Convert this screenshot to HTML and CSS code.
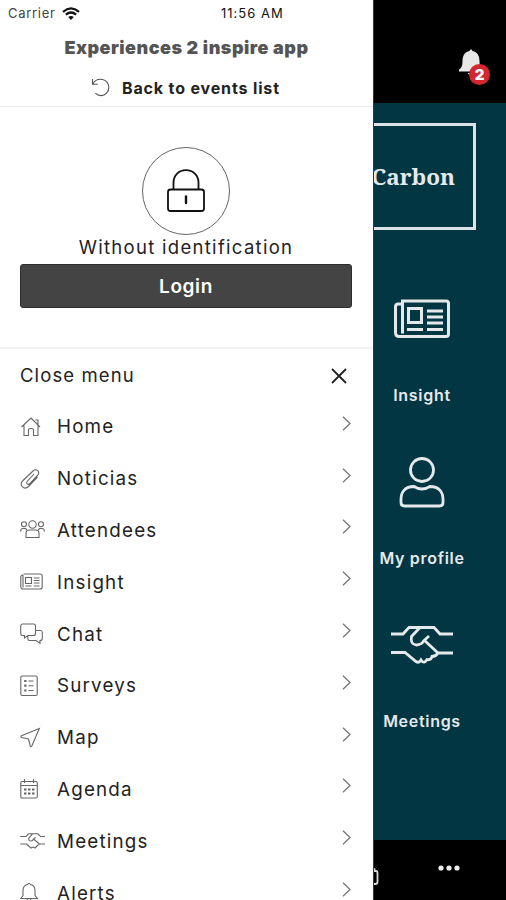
FILE: index.html
```
<!DOCTYPE html>
<html lang="en">
<head>
    <meta charset="UTF-8">
    <meta name="viewport" content="width=device-width, initial-scale=1.0">
    <title>Experiences 2 inspire app</title>
    <link rel="stylesheet" href="styles.css">
</head>
<body>

<div class="screen">
    <aside class="drawer">
        <div class="status-bar">
            <span class="carrier">Carrier</span>
            <svg class="wifi" width="18" height="13" viewBox="0 0 18 13" fill="none" stroke="#111" stroke-width="2.2">
                <path d="M1 4.8Q9-2 17 4.8M3.8 7.6Q9 3.4 14.2 7.6"/>
                <path d="M9 13L6.2 10.1Q9 7.8 11.8 10.1Z" fill="#111" stroke="none"/>
            </svg>
            <span class="clock">11:56 AM</span>
        </div>

        <h1 class="app-title">Experiences 2 inspire app</h1>

        <a class="back-link">
            <svg width="19" height="19" viewBox="0 0 19 19" fill="none" stroke="#555" stroke-width="1.1">
                <path d="M1.5 1V6.2H6.8M1.8 6C4 2 8 .9 11.4 1.5C15 2.2 17.8 5.4 17.8 9.2C17.8 14 14.4 17.6 10 17.6C7.5 17.6 5.6 16.6 4.4 15.2"/>
            </svg>
            <span>Back to events list</span>
        </a>

        <section class="account">
            <div class="avatar">
                <svg width="40" height="44" viewBox="0 0 40 44" fill="none" stroke="#111" stroke-width="1.8">
                    <rect x="2" y="20.5" width="36" height="21.5" rx="2.5"/>
                    <path d="M7.5 20V13.5C7.5 6 13 1.2 20 1.2S32.500 6 32.500 13.500V20"/>
                    <path d="M20 27.500V34" stroke-width="2.400" stroke-linecap="round"/>
                </svg>
            </div>
            <p class="account-name">Without identification</p>
            <button class="login">Login</button>
        </section>

        <div class="close-row">
            <span>Close menu</span>
            <svg width="16" height="16" viewBox="0 0 16 16" fill="none" stroke="#222" stroke-width="1.8">
                <path d="M1 1L15 15M15 1L1 15"/>
            </svg>
        </div>

        <ul class="menu">
            <li>
                <svg class="icon" viewBox="0 0 26 22">
                    <path d="M1.500 11L11 2L20 11M4 9V19.500H8.500V14Q8.500 12.500 11 12.500T13.500 14V19.500H18V9M15.500 4H18V8.500"/>
                </svg>
                <span class="label">Home</span>
                <svg class="chevron" viewBox="0 0 9 15"><path d="M1 .8L8 7.500L1 14.200"/></svg>
            </li>
            <li>
                <svg class="icon" viewBox="0 0 26 22">
                    <path d="M14 6L7.500 13C5.500 15.500 8 17.500 10 15.500L17.500 7.500C20.500 4 16.500 -.2 13 3L3 12.500C-1.500 17 4 22.500 8.500 18.500L17.500 9"/>
                </svg>
                <span class="label">Noticias</span>
                <svg class="chevron" viewBox="0 0 9 15"><path d="M1 .8L8 7.500L1 14.200"/></svg>
            </li>
            <li>
                <svg class="icon" viewBox="0 0 26 22">
                    <circle cx="12.500" cy="5.500" r="3.700"/>
                    <circle cx="4" cy="5.300" r="2.500"/>
                    <circle cx="21" cy="5.300" r="2.500"/>
                    <path d="M6 18.500V14Q6 11.500 9 11H16Q19 11.500 19 14V18.500ZM.6 12.500Q.6 9.500 3 9.500H5.500L7 11M24.400 12.500Q24.400 9.500 22 9.500H19.500L18 11"/>
                </svg>
                <span class="label">Attendees</span>
                <svg class="chevron" viewBox="0 0 9 15"><path d="M1 .8L8 7.500L1 14.200"/></svg>
            </li>
            <li>
                <svg class="icon" viewBox="0 0 26 22">
                    <path d="M3.500 3H20Q22.200 3 22.200 5V16Q22.200 18 20 18H2.500Q.8 18 .8 16V6Q.8 4 3 4M3 4V16.500M5.500 6.500H11.500V12.500H5.500ZM13.800 7H19.500M13.800 9.500H19.500M13.800 12H19.500M5.500 15H11.500M13.800 15H19.500"/>
                </svg>
                <span class="label">Insight</span>
                <svg class="chevron" viewBox="0 0 9 15"><path d="M1 .8L8 7.500L1 14.200"/></svg>
            </li>
            <li>
                <svg class="icon" viewBox="0 0 26 22">
                    <path d="M2.500 1H13.500Q15.500 1 15.500 3V10.500Q15.500 12.500 13.500 12.500H8L4.500 15V12.500H2.500Q.7 12.500 .7 10.500V3Q.7 1 2.500 1ZM15.500 7.500H20.500Q22.300 7.500 22.300 9.500V15.500Q22.300 17.500 20 17.500V20.200L16 17.500H9.500Q7.800 17.500 7.800 15.500V12.800"/>
                </svg>
                <span class="label">Chat</span>
                <svg class="chevron" viewBox="0 0 9 15"><path d="M1 .8L8 7.500L1 14.200"/></svg>
            </li>
            <li>
                <svg class="icon" viewBox="0 0 26 22">
                    <rect x=".8" y="1" width="16.400" height="19.500" rx="1.500"/>
                    <path d="M8.500 6H13.500M8.500 10.700H13.500M8.500 15.500H13.500"/>
                    <path d="M4.200 6H6.500M4.200 10.700H6.500M4.200 15.500H6.500" stroke-width="2.200"/>
                </svg>
                <span class="label">Surveys</span>
                <svg class="chevron" viewBox="0 0 9 15"><path d="M1 .8L8 7.500L1 14.200"/></svg>
            </li>
            <li>
                <svg class="icon" viewBox="0 0 26 22">
                    <path d="M19.300 1.500L1.500 8.800Q.2 9.700 1.500 10.500L8.500 12L10.300 19Q11 20.300 11.800 19Z"/>
                </svg>
                <span class="label">Map</span>
                <svg class="chevron" viewBox="0 0 9 15"><path d="M1 .8L8 7.500L1 14.200"/></svg>
            </li>
            <li>
                <svg class="icon" viewBox="0 0 26 22">
                    <path d="M2 3.500H16Q17.300 3.500 17.300 5V18.500Q17.300 20 16 20H2Q.8 20 .8 18.500V5Q.8 3.500 2 3.500ZM.8 7.500H17.300M4.500 1V5M13.500 1V5"/>
                    <path d="M4 11.500H14.500M4 15.500H14.500" stroke-width="1.800" stroke-dasharray="2.500 1.500"/>
                </svg>
                <span class="label">Agenda</span>
                <svg class="chevron" viewBox="0 0 9 15"><path d="M1 .8L8 7.500L1 14.200"/></svg>
            </li>
            <li>
                <svg class="icon" viewBox="0 0 26 22">
                    <path d="M.3 6.500H6L8.500 3.800H18L20.500 6.500H25M.3 14H6.500L11 18L13 17L15 18L17 16L19.500 14H25M12.500 3.800L9 8Q8 11 11 11Q13 11 13.500 9L15.500 7.500M13.500 9L19.500 14"/>
                </svg>
                <span class="label">Meetings</span>
                <svg class="chevron" viewBox="0 0 9 15"><path d="M1 .8L8 7.500L1 14.200"/></svg>
            </li>
            <li>
                <svg class="icon" viewBox="0 0 26 22">
                    <path d="M.8 16.500L3 13.500V8.500Q3 3.500 7.500 2.500Q9 .5 10.500 2.500Q15 3.500 15 8.500V13.500L17.500 16.500ZM7 17Q9 20.500 11 17"/>
                </svg>
                <span class="label">Alerts</span>
                <svg class="chevron" viewBox="0 0 9 15"><path d="M1 .8L8 7.500L1 14.200"/></svg>
            </li>
        </ul>
    </aside>

    <main class="app">
        <header class="app-header">
            <div class="bell">
                <svg width="24" height="28" viewBox="0 0 24 28" fill="#e8e8e8">
                    <path d="M10.500 2Q12 -1.500 13.500 2C18.500 3 20.500 7 20.500 12C20.500 17 21.500 19 24 20.500V22.500H0V20.500C2.500 19 3.500 17 3.500 12C3.500 7 5.500 3 10.500 2ZM8.500 24H15.500Q12 28.500 8.500 24Z"/>
                </svg>
                <span class="badge">2</span>
            </div>
        </header>

        <div class="content">
            <div class="brand">Carbon</div>

            <div class="tile">
                <svg width="64" height="64" viewBox="0 0 64 64" fill="none" stroke="#e6e9ec" stroke-width="3">
                    <path d="M12.500 14H56Q58.500 14 58.500 16.500V47Q58.500 49.500 56 49.500H9.500Q5.500 49.500 5.500 45.500V20Q5.500 17 8 17H12.500ZM12.500 14V46.500"/>
                    <path d="M18.500 21.500H31.500V35.500H18.500ZM37 24H53M37 30H53M37 36H53M37 42.500H53M17 42.500H33"/>
                </svg>
                <span>Insight</span>
            </div>
            <div class="tile">
                <svg width="64" height="64" viewBox="0 0 64 64" fill="none" stroke="#e6e9ec" stroke-width="2.800">
                    <ellipse cx="32" cy="20" rx="11.500" ry="11.500"/>
                    <path d="M24 36.500C15 36.500 11 42 11 49.500V52.500Q11 56 14.500 56H49.500Q53 56 53 52.500V49.500C53 42 49 36.500 40 36.500Q36 39 32 39T24 36.500Z"/>
                </svg>
                <span>My profile</span>
            </div>
            <div class="tile">
                <svg width="64" height="64" viewBox="0 0 64 64" fill="none" stroke="#e6e9ec" stroke-width="2.800">
                    <path d="M1 21H13L19 14.500H44L50 21H63M1 39.500H15L26 48.500Q29 50.500 31 47Q34 51.500 37 46.500Q41 47.500 42 43.500Q46 43.500 48 40H63"/>
                    <path d="M30 14.500L21.500 23.500Q20 31.500 26.500 32Q32 31.500 33.500 28L39 23M34 27L48 40"/>
                </svg>
                <span>Meetings</span>
            </div>
        </div>

        <footer class="tab-bar">
            <svg class="tab-icon" width="5" height="18" viewBox="0 0 5 18" fill="none" stroke="#ddd" stroke-width="1.800">
                <path d="M0 1.200H.5V3H2Q3.500 3 3.500 5V14Q3.500 16 1 16H0"/>
            </svg>
            <svg class="more" width="22" height="6" viewBox="0 0 22 6" fill="#eee">
                <circle cx="3" cy="3" r="2.600"/>
                <circle cx="11" cy="3" r="2.600"/>
                <circle cx="19" cy="3" r="2.600"/>
            </svg>
        </footer>
    </main>
</div>

</body>
</html>
```
FILE: styles.css
```
* {
    box-sizing: border-box;
}
body {
    margin: 0;
    font-family: Inter, "Open Sans", sans-serif;
    color: #222;
    background-color: #fff;
}
svg {
    display: block;
    flex-shrink: 0;
}
.screen {
    display: flex;
    width: 506px;
    height: 900px;
    overflow: hidden;
}

/* side menu */
.drawer {
    width: 373px;
    flex-shrink: 0;
    background-color: #fff;
}
.status-bar {
    display: flex;
    align-items: center;
    height: 26px;
    padding-left: 8px;
    font-size: 13px;
    color: #444;
}
.carrier {
    width: 54px;
    letter-spacing: 0.7px;
}
.clock {
    margin-left: 141px;
    letter-spacing: 1px;
    color: #111;
}
.app-title {
    margin: 0;
    height: 43px;
    line-height: 43px;
    font-size: 18px;
    font-weight: 900;
    letter-spacing: 0.5px;
    text-align: center;
    color: #555;
}
.back-link {
    display: flex;
    align-items: center;
    gap: 12px;
    height: 38px;
    padding-left: 91px;
    border-bottom: 1px solid #e9e9e9;
    font-size: 16px;
    font-weight: 700;
    letter-spacing: 0.85px;
}
.account {
    height: 242px;
    padding: 40px 21px 0 20px;
    border-bottom: 2px solid #f2f2f2;
    text-align: center;
}
.avatar {
    display: flex;
    align-items: center;
    justify-content: center;
    width: 88px;
    height: 88px;
    margin: 0 auto;
    border: 1px solid #666;
    border-radius: 50%;
}
.account-name {
    margin: 0;
    height: 29px;
    line-height: 25px;
    font-size: 18.5px;
    letter-spacing: 1.3px;
}
.login {
    display: block;
    width: 100%;
    height: 44px;
    border: 1px solid #2d2d2d;
    border-radius: 3px;
    background-color: #444;
    color: #fff;
    font-family: inherit;
    font-size: 19px;
    font-weight: 600;
    letter-spacing: 0.6px;
}
.close-row {
    display: flex;
    align-items: center;
    justify-content: space-between;
    height: 52px;
    padding: 2px 26px 0 20px;
    font-size: 18.5px;
    letter-spacing: 1.1px;
}
.close-row span {
    margin-bottom: 3px;
}
.menu {
    list-style: none;
    margin: 0;
    padding: 0;
}
.menu li {
    display: flex;
    align-items: center;
    height: 51.8px;
    padding: 0 22px 0 20px;
    font-size: 18.8px;
    letter-spacing: 1.2px;
}
.icon {
    width: 26px;
    height: 22px;
    margin-right: 11px;
    fill: none;
    stroke: #666;
    stroke-width: 1.1;
}
.label {
    flex: 1;
}
.chevron {
    width: 9px;
    height: 15px;
    margin-bottom: 7px;
    fill: none;
    stroke: #777;
    stroke-width: 1.3;
}

/* app behind the menu */
.app {
    display: flex;
    flex-direction: column;
    flex: 1;
    min-width: 0;
    overflow: hidden;
    border-left: 1px solid #333347;
    background-color: #023643;
    color: #e6e9ec;
}
.app-header {
    display: flex;
    justify-content: flex-end;
    height: 103px;
    padding: 49px 23px 0 0;
    background-color: #000;
}
.bell {
    position: relative;
    height: 28px;
}
.badge {
    position: absolute;
    top: 15px;
    left: 10px;
    width: 21px;
    height: 21px;
    border-radius: 50%;
    background-color: #d3262f;
    color: #fff;
    font-size: 15px;
    font-weight: 900;
    line-height: 21px;
    text-align: center;
}
.content {
    display: flex;
    flex-direction: column;
    height: 737px;
    padding-top: 20px;
}
.brand {
    align-self: flex-end;
    width: 340px;
    height: 107px;
    margin-right: 30px;
    padding-right: 18px;
    border: 3px solid #dce3e8;
    font-family: "Noto Serif", "DejaVu Serif", serif;
    font-size: 22.5px;
    font-weight: bold;
    line-height: 101px;
    text-align: right;
}
.tile {
    display: flex;
    flex-direction: column;
    align-items: center;
    height: 163px;
    margin-right: 36px;
    font-size: 16px;
    font-weight: 600;
    letter-spacing: 0.7px;
    white-space: nowrap;
}
.brand + .tile {
    margin-top: 57px;
}
.tile span {
    margin-top: 34px;
    line-height: 20px;
}
.tab-bar {
    display: flex;
    height: 60px;
    background-color: #000;
}
.tab-icon {
    margin-top: 28px;
}
.more {
    margin: 25px 0 0 59px;
}
```
